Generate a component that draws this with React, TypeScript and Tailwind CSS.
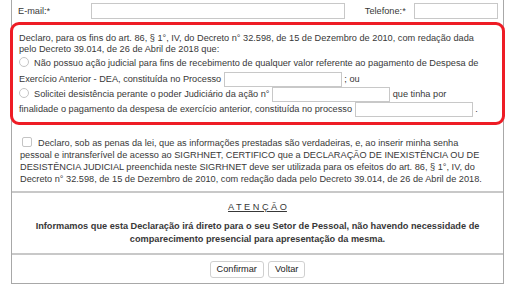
import React from 'react';

const Radio = () => (
  <span className="inline-block w-[10px] h-[10px] rounded-full border border-[#c4c4c4] bg-white align-[-1px] mr-[5px]" />
);

const TextInput = ({ width }: { width: string }) => (
  <span className={`inline-block h-[15px] border border-[#c8c8c8] bg-white align-middle ${width}`} />
);

export default function App() {
  return (
    <div className="w-[516px] h-[285px] bg-white text-[9.2px] leading-[11px] text-[#383838] overflow-hidden whitespace-nowrap" style={{ fontFamily: '"Liberation Sans", Arial, sans-serif' }}>
      <div className="ml-[11px] w-[493px] border-x border-b border-[#a8a8a8]">
        {/* contact row */}
        <div className="flex items-center h-[22px] pl-[6px] pr-[5px]">
          <span className="w-[73px]">E-mail:*</span>
          <span className="w-[256px] h-[16px] border border-[#c8c8c8]" />
          <span className="ml-[20px] w-[49px]">Telefone:*</span>
          <span className="w-[85px] h-[16px] border border-[#c8c8c8]" />
        </div>

        {/* declaration box */}
        <div className="-mx-[2px] border-[3px] border-[#ee1c25] rounded-[9px] px-[6px] pt-[8px] pb-[5px]">
          <div>Declaro, para os fins do art. 86, § 1°, IV, do Decreto n° 32.598, de 15 de Dezembro de 2010, com redação dada</div>
          <div>pelo Decreto 39.014, de 26 de Abril de 2018 que:</div>
          <div className="mt-[2px]"><Radio />Não possuo ação judicial para fins de recebimento de qualquer valor referente ao pagamento de Despesa de</div>
          <div className="mt-[3px] h-[15px] leading-[15px]">Exercício Anterior - DEA, constituída no Processo <TextInput width="w-[118px]" /> ; ou</div>
          <div className="h-[15px] leading-[15px]"><Radio />Solicitei desistência perante o poder Judiciário da ação n° <TextInput width="w-[118px]" /> que tinha por</div>
          <div className="h-[15px] leading-[15px]">finalidade o pagamento da despesa de exercício anterior, constituída no processo <TextInput width="w-[118px]" /> .</div>
        </div>

        {/* confirmation checkbox */}
        <div className="px-[8px] pt-[12px] pb-[6px] leading-[12px]">
          <div>
            <span className="inline-block w-[10px] h-[10px] rounded-[2px] border border-[#c4c4c4] bg-white align-[-1px] mr-[6px] ml-[2px]" />
            Declaro, sob as penas da lei, que as informações prestadas são verdadeiras, e, ao inserir minha senha
          </div>
          <div>pessoal e intransferível de acesso ao SIGRHNET, CERTIFICO que a DECLARAÇÃO DE INEXISTÊNCIA OU DE</div>
          <div>DESISTÊNCIA JUDICIAL preenchida neste SIGRHNET deve ser utilizada para os efeitos do art. 86, § 1°, IV, do</div>
          <div>Decreto n° 32.598, de 15 de Dezembro de 2010, com redação dada pelo Decreto 39.014, de 26 de Abril de 2018.</div>
        </div>

        {/* notice */}
        <div className="border-t-2 border-[#c8c8c8] pt-[8px] pb-[7px] text-center leading-[13px]">
          <div className="underline">A T E N Ç Ã O</div>
          <div className="mt-[6px] font-bold">Informamos que esta Declaração irá direto para o seu Setor de Pessoal, não havendo necessidade de</div>
          <div className="font-bold">comparecimento presencial para apresentação da mesma.</div>
        </div>

        {/* actions */}
        <div className="border-t-2 border-[#c8c8c8] flex justify-center gap-[4px] pt-[6px] pb-[5px]">
          <button className="h-[17px] px-[6px] border border-[#d0d0d0] rounded-[3px] bg-white text-[#222]">Confirmar</button>
          <button className="h-[17px] px-[6px] border border-[#d0d0d0] rounded-[3px] bg-white text-[#222]">Voltar</button>
        </div>
      </div>
    </div>
  );
}
